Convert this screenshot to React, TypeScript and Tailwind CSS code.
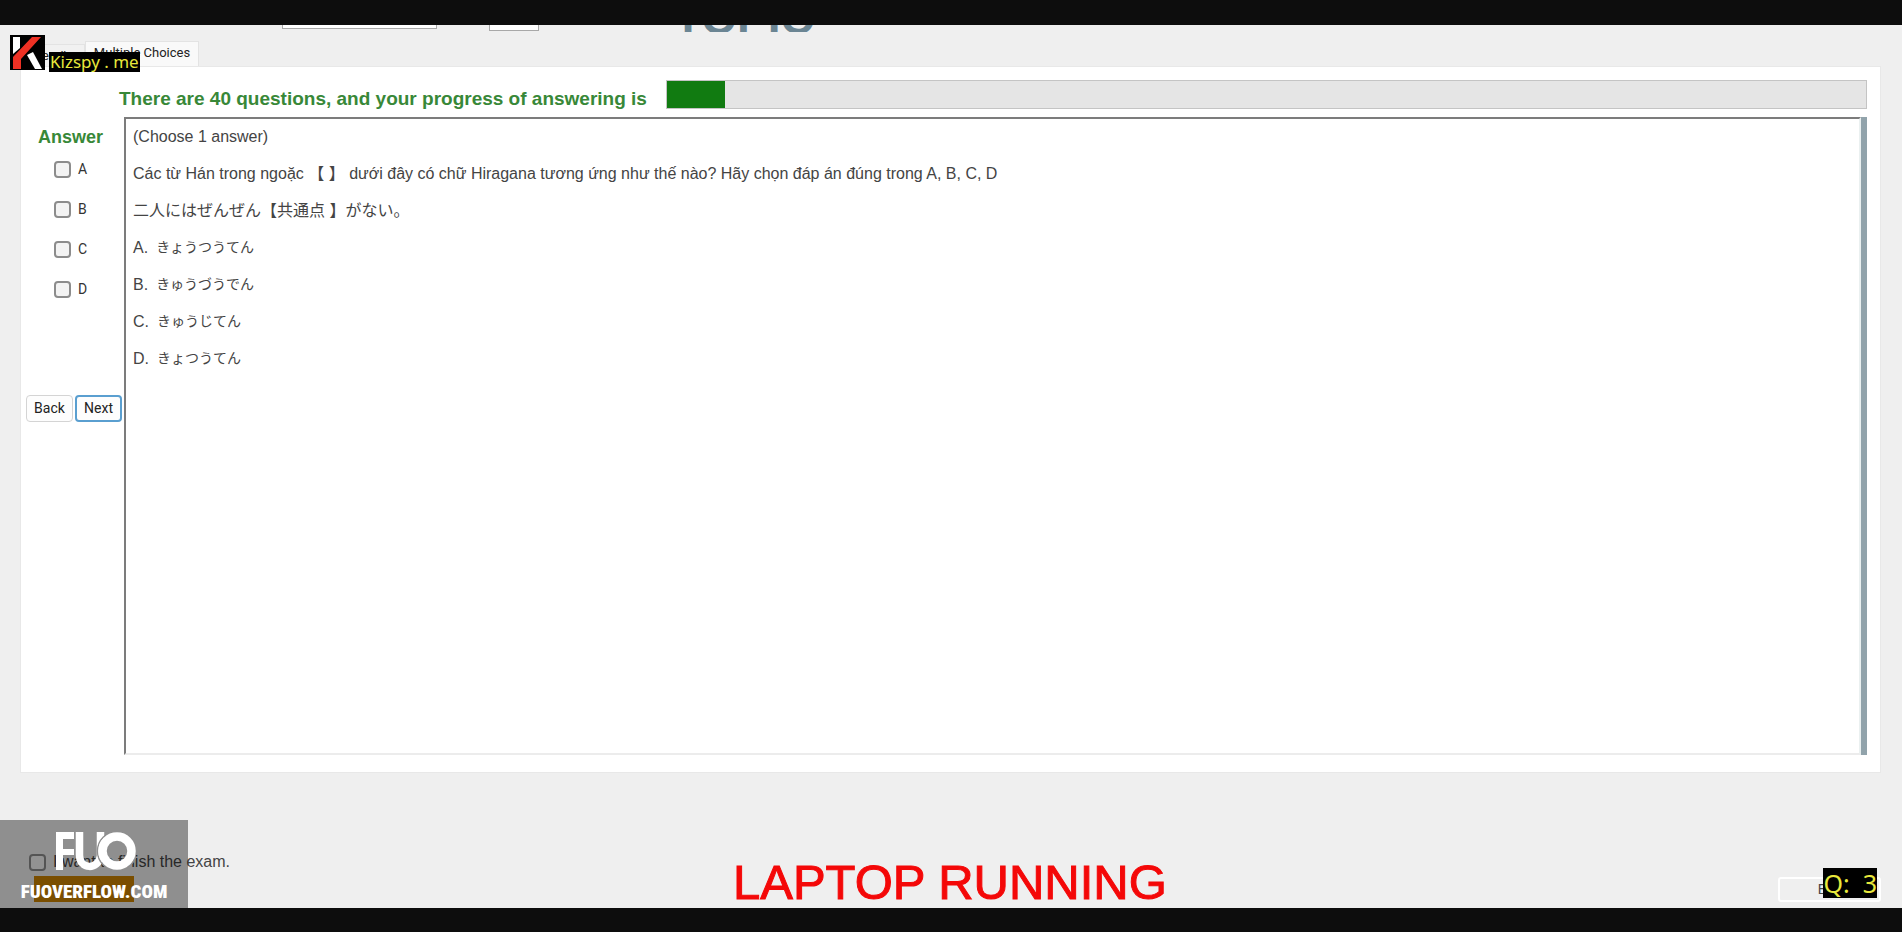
import React from "react";

const ANSWERS = ["A", "B", "C", "D"];

const LINES = [
  "(Choose 1 answer)",
  "Các từ Hán trong ngoặc 【 】 dưới đây có chữ Hiragana tương ứng như thế nào? Hãy chọn đáp án đúng trong A, B, C, D",
  "二人にはぜんぜん【共通点 】がない。",
];

const OPTIONS = [
  ["A.", "きょうつうてん"],
  ["B.", "きゅうづうでん"],
  ["C.", "きゅうじてん"],
  ["D.", "きょつうてん"],
];

const boxClass =
  "size-[17px] shrink-0 appearance-none rounded-[4px] border-2 border-[#8c8c8c] bg-[#f3f3f3]";

function KizspyBadge() {
  return (
    <div className="absolute left-[10px] top-[35px] flex items-end gap-1">
      <svg viewBox="0 0 35 35" className="size-[35px] shrink-0" aria-hidden="true">
        <rect width="35" height="35" fill="#000" />
        <path d="M3 2h7v11l-7 6z" fill="#fff" />
        <path d="M17 20l6-3 9 17h-7z" fill="#fff" />
        <path d="M22 2h9L11 24v10H3V22z" fill="#ee3124" />
      </svg>
      <span className="-mb-0.5 whitespace-pre bg-black px-px font-['Noto_Sans',sans-serif] text-[17px] leading-[20px] text-[#e8e83c]">
        Kizspy . me
      </span>
    </div>
  );
}

function FuoBadge() {
  return (
    <div className="absolute bottom-0 left-0 flex h-[88px] w-[188px] flex-col items-center bg-black/40 pt-3">
      <svg viewBox="0 0 80 40" className="ml-1 h-10 w-20" aria-hidden="true">
        <path d="M0 0h18v7H7v10h11v6H7v15H0z" fill="#fff" />
        <path d="M23.500 0v23c0 15 19 15 21 1V0" fill="none" stroke="#fff" strokeWidth="7.500" />
        <circle cx="61" cy="19" r="19.500" fill="none" stroke="#8f8f8f" strokeWidth="1.500" />
        <circle cx="61" cy="19" r="14.500" fill="none" stroke="#fff" strokeWidth="8.500" />
      </svg>
      <span className="mt-2 font-['Roboto_Condensed','Roboto',sans-serif] text-[19px] font-black leading-6 text-white">
        FUOVERFLOW.COM
      </span>
    </div>
  );
}

export default function App() {
  return (
    <div className="flex min-h-screen flex-col bg-[#0d0d0d] font-['Liberation_Sans','Noto_Sans_CJK_JP',sans-serif]">
      <div className="h-[25px] shrink-0" />
      <main className="flex grow flex-col overflow-hidden bg-[#efefef]">
        <header className="flex h-[7px] shrink-0 items-end overflow-hidden pl-[282px]">
          <select aria-label="Exam" className="mb-[3px] h-6 w-[155px] shrink-0 border border-[#a8a8a8] bg-white" />
          <select aria-label="Size" className="mb-px ml-[52px] h-6 w-[50px] shrink-0 border border-[#a8a8a8] bg-white" />
          <span className="ml-[135px] text-[46px] font-bold leading-7 text-[#6b8593]">
            TOPIC
          </span>
        </header>

        <nav className="flex h-[34px] shrink-0 items-end pl-7 text-[13px] text-[#222]">
          <button className="h-[22px] w-[57px] border border-b-0 border-[#e3e3e3] bg-[#f1f1f1]">Reading</button>
          <button className="h-[25px] w-[114px] border border-b-0 border-[#e3e3e3] bg-[#f9f9f9] pb-0.5 font-['Roboto',sans-serif]">Multiple Choices</button>
        </nav>

        <section className="ml-5 mr-[21px] flex h-[707px] shrink-0 flex-col border border-[#e8e8e8] bg-white pb-[17px] pr-[13px]">
          <div className="flex h-[50px] shrink-0 items-start pt-[13px]">
            <p className="w-[546px] shrink-0 whitespace-nowrap pl-[98px] text-[19px] font-bold leading-[38px] text-[#388838]">
              There are 40 questions, and your progress of answering is
            </p>
            <div
              role="progressbar"
              aria-label="Progress of answering"
              aria-valuenow={2}
              aria-valuemax={40}
              className="ml-[99px] h-[29px] grow border border-[#c4c4c4] bg-[#e5e5e5]"
            >
              <div className="h-full w-[58px] bg-[#117b11]" />
            </div>
          </div>

          <div className="flex grow">
            <aside className="flex w-[103px] shrink-0 flex-col">
              <h2 className="mt-2 pl-[17px] text-[18px] font-bold leading-6 text-[#388838]">Answer</h2>
              <div className="flex flex-col pl-[33px]">
                {ANSWERS.map((a) => (
                  <label key={a} className="flex h-10 items-center gap-[7px] font-['Roboto',sans-serif] text-[14px] text-[#333]">
                    <input type="checkbox" className={boxClass} />
                    {a}
                  </label>
                ))}
              </div>
              <div className="mt-[86px] flex gap-[2px] pl-[5px] font-['Roboto',sans-serif] text-[14px] text-[#222]">
                <button className="h-[27px] w-[47px] rounded-[4px] border border-[#d4d4d4] bg-[#fdfdfd]">Back</button>
                <button className="h-[27px] w-[47px] rounded-[4px] border-2 border-[#5a9fd0] bg-[#fdfdfd]">Next</button>
              </div>
            </aside>

            <article className="grow border-2 border-b-[#ececec] border-l-[#7c7c7c] border-r-[#eaf0f0] border-t-[#7c7c7c] pl-[7px] text-[16px] leading-[37px] text-[#444]">
              <div className="-mt-px">
                {LINES.map((l) => (
                  <p key={l} className="whitespace-pre">{l}</p>
                ))}
                {OPTIONS.map(([letter, word]) => (
                  <p key={letter} className="flex gap-2">
                    <span>{letter}</span>
                    <span className="text-[14px]">{word}</span>
                  </p>
                ))}
              </div>
            </article>
            <div className="w-[6px] shrink-0 bg-[#91a3ab]" />
          </div>
        </section>

        <footer className="relative flex grow items-end pb-[6px] pl-[29px] pr-[21px]">
          <div className="flex w-[704px] flex-col">
            <label className="flex items-center gap-[7px] text-[16px] leading-6 text-[#444]">
              <input type="checkbox" className={boxClass} />
              I want to finish the exam.
            </label>
            <button className="ml-[5px] mt-0.5 h-[26px] w-[100px] bg-[#cc8200] text-[13px] text-[#b87400]">Finish</button>
          </div>
          <p className="text-[49px] leading-[40px] text-[#f40808] [-webkit-text-stroke:1px_#f40808]">LAPTOP RUNNING</p>
          <button className="relative ml-auto h-[25px] w-[103px] rounded-[3px] border-2 border-white text-[14px] text-[#444]">
            Exit
            <span className="absolute -top-[11px] right-0.5 whitespace-pre bg-black font-['Noto_Sans',sans-serif] text-[25px] leading-[30px] text-[#e8e83c]">
              Q:  3
            </span>
          </button>
          <FuoBadge />
        </footer>
      </main>
      <div className="h-6 shrink-0" />
      <KizspyBadge />
    </div>
  );
}
